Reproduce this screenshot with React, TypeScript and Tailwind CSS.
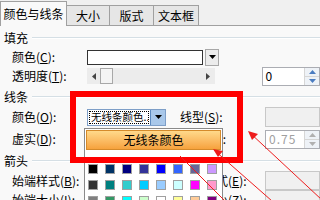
import { ReactNode } from "react";

function cn(...classes: Array<string | undefined | null | false>) {
  return classes.filter(Boolean).join(" ");
}

function Tab({ children, active, className }: { children: ReactNode; active?: boolean; className?: string }) {
  return (
    <div
      className={cn(
        "flex items-center justify-center border border-[#a0a0a0] border-b-0",
        active ? "h-[25px] bg-[#f9f9f9] relative top-[1px] z-10" : "h-[20px] bg-[#e6e6e6] -ml-[1px]",
        className,
      )}
    >
      {children}
    </div>
  );
}

function Section({ children, className }: { children: ReactNode; className?: string }) {
  return (
    <div className={cn("flex items-center pl-[4px]", className)}>
      <span>{children}</span>
      <div className="ml-[4px] flex-1 border-t border-[#d5dfe5] border-b border-b-white" />
    </div>
  );
}

function Label({ children, className }: { children: ReactNode; className?: string }) {
  return <span className={cn("shrink-0 whitespace-nowrap", className)}>{children}</span>;
}

function Spinner({ value, disabled, className }: { value?: string; disabled?: boolean; className?: string }) {
  return (
    <div className={cn("flex h-[19px] w-[60px] border border-[#abadb3] bg-white", className)}>
      <div className={cn("flex-1 pl-[3px] flex items-center", disabled && "text-[#a0a0a0] tracking-[1px]")}>{value}</div>
      <div className="flex w-[15px] flex-col border-l border-[#d6d6d6]">
        <div className="flex flex-1 items-center justify-center bg-[#eef2f7]">
          <svg width="7" height="4" viewBox="0 0 7 4">
            <path d="M0 4 L3.5 0 L7 4 Z" fill={disabled ? "#b0b0b0" : "#4a7cc0"} />
          </svg>
        </div>
        <div className="flex flex-1 items-center justify-center border-t border-[#d6d6d6] bg-[#eef2f7]">
          <svg width="7" height="4" viewBox="0 0 7 4">
            <path d="M0 0 L3.5 4 L7 0 Z" fill={disabled ? "#b0b0b0" : "#4a7cc0"} />
          </svg>
        </div>
      </div>
    </div>
  );
}

const palette = [
  ["#000000", "#003366", "#000080", "#333399", "#0000ff", "#3366ff", "#666699", "#cc99ff"],
  ["#333333", "#008080", "#33cccc", "#00ccff", "#99ccff", "#ccffff", "#ff00ff", "#ff99cc"],
  ["#808080", "#339966", "#00ffff", "#ccffcc", "#ffffff", "#ffff99", "#ffcc99", "#800080"],
];

export default function App() {
  return (
    <div
      className="relative h-[200px] w-[320px] overflow-hidden bg-[#f9f9f9] text-[12px] leading-none text-black"
      style={{ fontFamily: '"Noto Sans CJK SC", "Noto Sans", sans-serif' }}
    >
      {/* tabs */}
      <div className="flex h-[26px] items-end border-b border-[#a0a0a0] bg-[#f0f0f0]">
        <Tab active className="w-[67px]">颜色与线条</Tab>
        <Tab className="w-[44px]">大小</Tab>
        <Tab className="w-[45px]">版式</Tab>
        <Tab className="w-[46px]">文本框</Tab>
      </div>

      <Section className="h-[21px] mt-[1px]">填充</Section>

      <div className="flex h-[18px] items-center">
        <Label className="w-[87px] pl-[12px]">颜色(<u>C</u>):</Label>
        <div className="h-[15px] w-[116px] border border-[#333] bg-white" />
        <div className="ml-[2px] flex h-[17px] w-[14px] items-center justify-center border border-[#a8a8a8] bg-[#ececec]">
          <svg width="7" height="4" viewBox="0 0 7 4">
            <path d="M0 0 L3.5 4 L7 0 Z" fill="#000" />
          </svg>
        </div>
      </div>

      <div className="flex h-[20px] items-center">
        <Label className="w-[87px] pl-[12px]">透明度(<u>T</u>):</Label>
        <div className="flex h-[16px] w-[131px] items-center bg-[#ececec]">
          <div className="flex h-full w-[13px] items-center justify-center">
            <svg width="4" height="7" viewBox="0 0 4 7">
              <path d="M4 0 L0 3.5 L4 7 Z" fill="#444" />
            </svg>
          </div>
          <div className="h-full w-[13px] border border-[#a8a8a8] bg-[#f4f4f4]" />
          <div className="flex-1" />
          <div className="flex h-full w-[13px] items-center justify-center">
            <svg width="4" height="7" viewBox="0 0 4 7">
              <path d="M0 0 L4 3.5 L0 7 Z" fill="#444" />
            </svg>
          </div>
        </div>
        <Spinner value="0" className="ml-[47px] w-[56px]" />
      </div>

      <Section className="h-[21px]">线条</Section>

      <div className="flex h-[20px] items-center">
        <Label className="w-[87px] pl-[12px]">颜色(<u>O</u>):</Label>
        <div className="flex h-[17px] w-[79px] border border-[#7e9fc8] bg-white">
          <div className="m-[1px] flex flex-1 items-center overflow-hidden whitespace-nowrap border border-dotted border-black pl-[1px] text-[10.5px]">
            无线条颜色...
          </div>
          <div className="flex w-[15px] items-center justify-center bg-[#a9c8ea] border-l border-[#5c8ac0]">
            <svg width="7" height="4" viewBox="0 0 7 4">
              <path d="M0 0 L3.5 4 L7 0 Z" fill="#000" />
            </svg>
          </div>
        </div>
        <Label className="ml-[14px] w-[85px]">线型(<u>S</u>):</Label>
        <div className="h-[20px] w-[60px] border border-[#c8c8c8] bg-[#f0f0f0]" />
      </div>

      <div className="flex h-[24px] items-center">
        <Label className="w-[180px] pl-[12px]">虚实(<u>D</u>):</Label>
        <Label className="w-[85px]">粗细(<u>W</u>):</Label>
        <Spinner value="0.75" disabled className="w-[56px]" />
      </div>

      <Section className="h-[20px]">箭头</Section>

      <div className="flex h-[19px] items-center">
        <Label className="w-[180px] pl-[12px]">始端样式(<u>B</u>):</Label>
        <Label className="w-[85px]">末端样式(<u>E</u>):</Label>
        <div className="h-[19px] w-[60px] border border-[#c8c8c8] bg-[#f0f0f0]" />
      </div>

      <div className="flex h-[19px] items-center">
        <Label className="w-[180px] pl-[12px]">始端大小(<u>I</u>):</Label>
        <Label className="w-[85px]">末端大小(<u>Z</u>):</Label>
        <div className="h-[19px] w-[60px] border border-[#c8c8c8] bg-[#f0f0f0]" />
      </div>

      {/* colour dropdown popup */}
      <div className="absolute left-[84px] top-[128px] z-20 h-[80px] w-[139px] border border-[#8a8a8a] bg-white">
        <div className="mx-[1px] mt-[1px] flex h-[20px] items-center justify-center border border-[#d58a2a] bg-gradient-to-b from-[#ffd98a] to-[#f6a23c]">
          无线条颜色
        </div>
        <div className="mt-[14px] flex flex-col gap-[6px] pl-[3px]">
          {palette.map((row, i) => (
            <div key={i} className="flex gap-[7px]">
              {row.map((c) => (
                <div key={c} className="h-[10px] w-[10px] border border-[#a0a0a0]" style={{ backgroundColor: c }} />
              ))}
            </div>
          ))}
        </div>
      </div>

      {/* red highlight box */}
      <div className="absolute left-[70px] top-[91px] z-30 h-[72px] w-[173px] border-[6px] border-[#ff0000]" />

      {/* annotation arrows */}
      <svg className="absolute left-0 top-0 z-40" width="320" height="200" viewBox="0 0 320 200">
        <g stroke="#ee1c1c" strokeWidth="1" fill="none">
          <line x1="249" y1="132" x2="322" y2="200" />
          <line x1="214" y1="150" x2="272" y2="201" />
          <line x1="180" y1="156" x2="226" y2="202" />
        </g>
        <path d="M248 131 L258 134 L252 140 Z" fill="#ee1c1c" />
        <path d="M213 149 L223 151 L218 157 Z" fill="#ee1c1c" />
      </svg>
    </div>
  );
}
